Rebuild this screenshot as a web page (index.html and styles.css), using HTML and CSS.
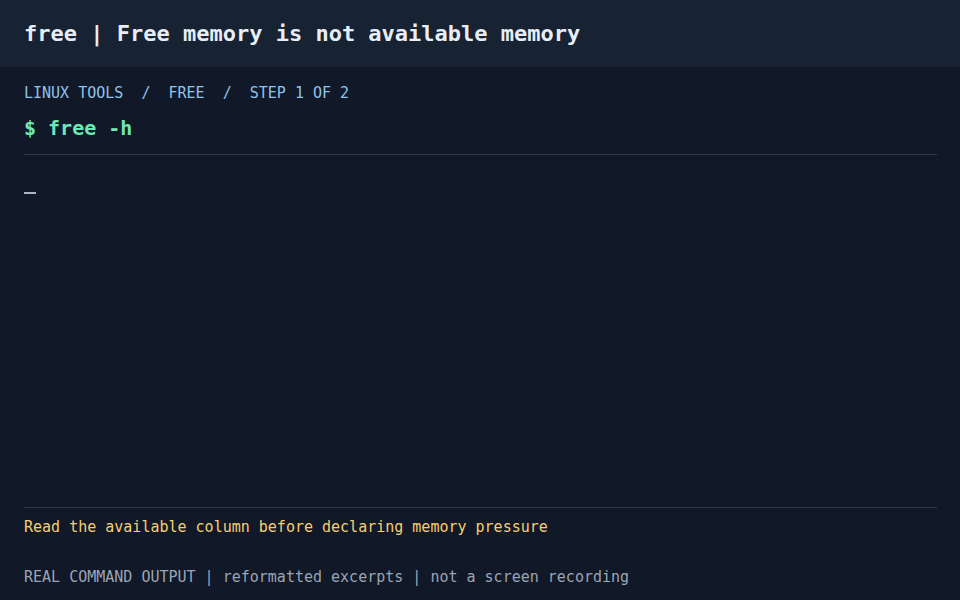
FILE: index.html
```html
<!DOCTYPE html>
<html lang="en">
<head>
<meta charset="utf-8">
<title>free | Free memory is not available memory</title>
<link rel="stylesheet" href="styles.css">
</head>
<body>
<div class="page">
  <header class="topbar">
    <h1 class="title">free | Free memory is not available memory</h1>
  </header>
  <main class="content">
    <nav class="crumbs">LINUX TOOLS&nbsp;&nbsp;/&nbsp;&nbsp;FREE&nbsp;&nbsp;/&nbsp;&nbsp;STEP 1 OF 2</nav>
    <div class="command">$ free -h</div>
    <div class="terminal">
      <span class="cursor"></span>
    </div>
    <div class="note">Read the available column before declaring memory pressure</div>
    <div class="footer">REAL COMMAND OUTPUT | reformatted excerpts | not a screen recording</div>
  </main>
</div>
</body>
</html>
```
FILE: styles.css
```css
* { box-sizing: border-box; }
html, body { margin: 0; padding: 0; }
body {
  background: #111827;
  font-family: "DejaVu Sans Mono", "Liberation Mono", monospace;
  color: #e5e7eb;
}
.page {
  width: 960px;
  height: 600px;
  display: flex;
  flex-direction: column;
}
.topbar {
  height: 67px;
  background: #172233;
  display: flex;
  align-items: center;
  padding: 0 24px;
}
.title {
  margin: 0;
  font-size: 22px;
  font-weight: bold;
  color: #e8eef7;
  line-height: 28px;
}
.content {
  flex: 1;
  display: flex;
  flex-direction: column;
  padding: 16px 23px 13px 24px;
}
.crumbs {
  font-size: 15px;
  line-height: 20px;
  color: #8fc3ea;
}
.command {
  margin-top: 13px;
  font-size: 20px;
  line-height: 24px;
  font-weight: bold;
  color: #6ee7b7;
  padding-bottom: 14px;
  border-bottom: 1px solid #2b3a4c;
}
.terminal {
  flex: 1;
  padding-top: 37px;
  border-bottom: 1px solid #2f3a48;
}
.cursor {
  display: block;
  width: 12px;
  height: 2px;
  background: #a9b6c8;
}
.note {
  margin-top: 9px;
  font-size: 15px;
  line-height: 20px;
  color: #f5cf6f;
}
.footer {
  margin-top: 30px;
  font-size: 15px;
  line-height: 20px;
  color: #9aa5b4;
}
```
